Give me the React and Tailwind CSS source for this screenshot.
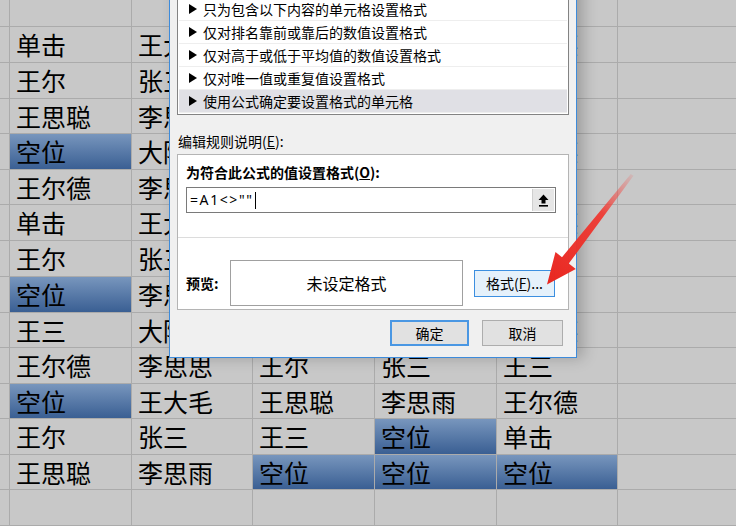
import React from "react";

const CJK = { fontFamily: '"Noto Sans CJK SC", "Noto Sans", sans-serif' };

const colW = ["w-[122px]", "w-[122px]", "w-[121px]", "w-[122px]", "w-[122px]", "w-[121px]", "w-[122px]"];

const rows = [
  { h: "h-[36px]", c: ["", "", "", "", "", "", ""] },
  { h: "h-[36px]", c: ["", "单击", "王大毛", "王三", "张三", "王尔德", ""] },
  { h: "h-[36px]", c: ["", "王尔", "张三", "王尔德", "王三", "单击", ""] },
  { h: "h-[35px]", c: ["", "王思聪", "李思雨", "张三", "王尔", "单击", ""] },
  { h: "h-[36px]", c: ["", "*空位", "大陆", "李思思", "王三", "王尔德", ""] },
  { h: "h-[35px]", c: ["", "王尔德", "李思思", "王尔", "张三", "", ""] },
  { h: "h-[36px]", c: ["", "单击", "王大毛", "王三", "张三", "王尔德", ""] },
  { h: "h-[36px]", c: ["", "王尔", "张三", "王尔德", "王三", "单击", ""] },
  { h: "h-[36px]", c: ["", "*空位", "李思雨", "王尔", "张三", "单击", ""] },
  { h: "h-[35px]", c: ["", "王三", "大陆", "李思思", "王三", "王尔德", ""] },
  { h: "h-[36px]", c: ["", "王尔德", "李思思", "王尔", "张三", "王三", ""] },
  { h: "h-[35px]", c: ["", "*空位", "王大毛", "王思聪", "李思雨", "王尔德", ""] },
  { h: "h-[36px]", c: ["", "王尔", "张三", "王三", "*空位", "单击", ""] },
  { h: "h-[35px]", c: ["", "王思聪", "李思雨", "*空位", "*空位", "*空位", ""] },
  { h: "h-[36px]", c: ["", "", "", "", "", "", ""] },
];

function Cell({ w, value }) {
  const blue = value.startsWith("*");
  const text = blue ? value.slice(1) : value;
  return (
    <div
      className={`${w} h-full shrink-0 flex items-center pl-[6px] border-r border-b border-[#ababab] text-[25px] leading-none text-black overflow-hidden whitespace-nowrap ${
        blue ? "bg-linear-to-b from-[#7896bd] to-[#3a5f93]" : ""
      }`}
    >
      {text}
    </div>
  );
}

const items = [
  "基于各自值设置所有单元格的格式",
  "只为包含以下内容的单元格设置格式",
  "仅对排名靠前或靠后的数值设置格式",
  "仅对高于或低于平均值的数值设置格式",
  "仅对唯一值或重复值设置格式",
  "使用公式确定要设置格式的单元格",
];

function Tri() {
  return (
    <svg width="8" height="10" viewBox="0 0 8 10" className="shrink-0">
      <polygon points="0,0 8,5 0,10" fill="#000" />
    </svg>
  );
}

function UpIcon() {
  return (
    <svg width="11" height="13" viewBox="0 0 11 13">
      <polygon points="5.5,0.5 0.5,6 3.5,6 3.5,9.5 7.5,9.5 7.5,6 10.5,6" fill="#000" />
      <rect x="1" y="11" width="9" height="1.6" fill="#000" />
    </svg>
  );
}

export default function App() {
  return (
    <div className="relative w-[736px] h-[526px] overflow-hidden bg-[#c8c8c8]" style={CJK}>
      {/* spreadsheet */}
      <div className="ml-[-112px] mt-[-9px] flex flex-col">
        {rows.map((r, i) => (
          <div key={i} className={`flex ${r.h}`}>
            {r.c.map((v, j) => (
              <Cell key={j} w={colW[j]} value={v} />
            ))}
          </div>
        ))}
      </div>

      {/* dialog */}
      <div className="absolute left-[169px] top-[-40px] w-[408px] h-[398px] bg-[#f0f0f0] border-x border-b border-[#3d8bdb] shadow-[6px_0_14px_rgba(0,0,0,0.22)] flex flex-col pl-[7px] pt-[13px] text-[14px] text-black">
        {/* list box */}
        <div className="w-[392px] border border-[#838383] p-[1px] bg-white">
          {items.map((t, i) => (
            <div
              key={i}
              className={`h-[23px] flex items-center gap-[6px] pl-[10px] border-b border-[#eeeeee] leading-none ${
                i === items.length - 1 ? "bg-[#e0e0e5]" : ""
              }`}
            >
              <Tri />
              <span>{t}</span>
            </div>
          ))}
        </div>

        <div className="mt-[16px] h-[20px] flex items-center pl-[1px] leading-none">
          编辑规则说明(<span className="underline">E</span>):
        </div>

        {/* rule box */}
        <div className="mt-[3px] w-[392px] h-[156px] border border-[#b4b4b4] bg-white flex flex-col">
          <div className="h-[83px] border-b border-[#dcdcdc] pl-[8px] pt-[7px] flex flex-col">
            <div className="h-[20px] flex items-center font-bold leading-none">
              为符合此公式的值设置格式(<span className="underline">O</span>):
            </div>
            <div className="mt-[5px] w-[370px] h-[26px] border border-[#7a7a7a] flex items-center bg-white">
              <span
                className="pl-[3px] tracking-[1.6px] leading-none text-[14px]"
                style={{ fontFamily: '"Noto Sans", "DejaVu Sans", sans-serif' }}
              >
                =A1&lt;&gt;""
              </span>
              <span className="w-[1px] h-[17px] bg-black ml-[1px]" />
              <div className="ml-auto mr-[1px] w-[22px] h-[22px] bg-[#e6e6e6] border-l border-[#cfcfcf] flex items-center justify-center">
                <UpIcon />
              </div>
            </div>
          </div>
          <div className="flex items-center pl-[8px] pt-[22px] pb-[2px]">
            <div className="w-[44px] font-bold leading-none">预览:</div>
            <div className="w-[233px] h-[46px] border border-[#a0a0a0] bg-white flex items-center justify-center text-[16px] leading-none">
              未设定格式
            </div>
            <div className="ml-[11px] w-[81px] h-[27px] border border-[#3c8fe0] bg-[#e5f1fb] flex items-center justify-center leading-none">
              格式(<span className="underline">F</span>)...
            </div>
          </div>
        </div>

        {/* buttons */}
        <div className="mt-[10px] flex justify-end gap-[13px] pr-[13px]">
          <div className="w-[79px] h-[26px] border-2 border-[#4a97e3] bg-[#e1e1e1] flex items-center justify-center leading-none">
            确定
          </div>
          <div className="w-[81px] h-[26px] border border-[#adadad] bg-[#e1e1e1] flex items-center justify-center leading-none">
            取消
          </div>
        </div>
      </div>

      {/* red arrow */}
      <svg className="absolute left-0 top-0 pointer-events-none" width="736" height="526" viewBox="0 0 736 526">
        <defs>
          <linearGradient id="ag" x1="632" y1="175" x2="547" y2="284" gradientUnits="userSpaceOnUse">
            <stop offset="0" stopColor="#f25a55" stopOpacity="0.15" />
            <stop offset="0.35" stopColor="#ef3b34" stopOpacity="0.95" />
            <stop offset="1" stopColor="#e8261f" stopOpacity="1" />
          </linearGradient>
        </defs>
        <polygon
          points="633.5,175.8 568.8,263.6 575.8,269 547,284.5 555.5,252 562,257.2 630.8,174"
          fill="url(#ag)"
        />
      </svg>
    </div>
  );
}
